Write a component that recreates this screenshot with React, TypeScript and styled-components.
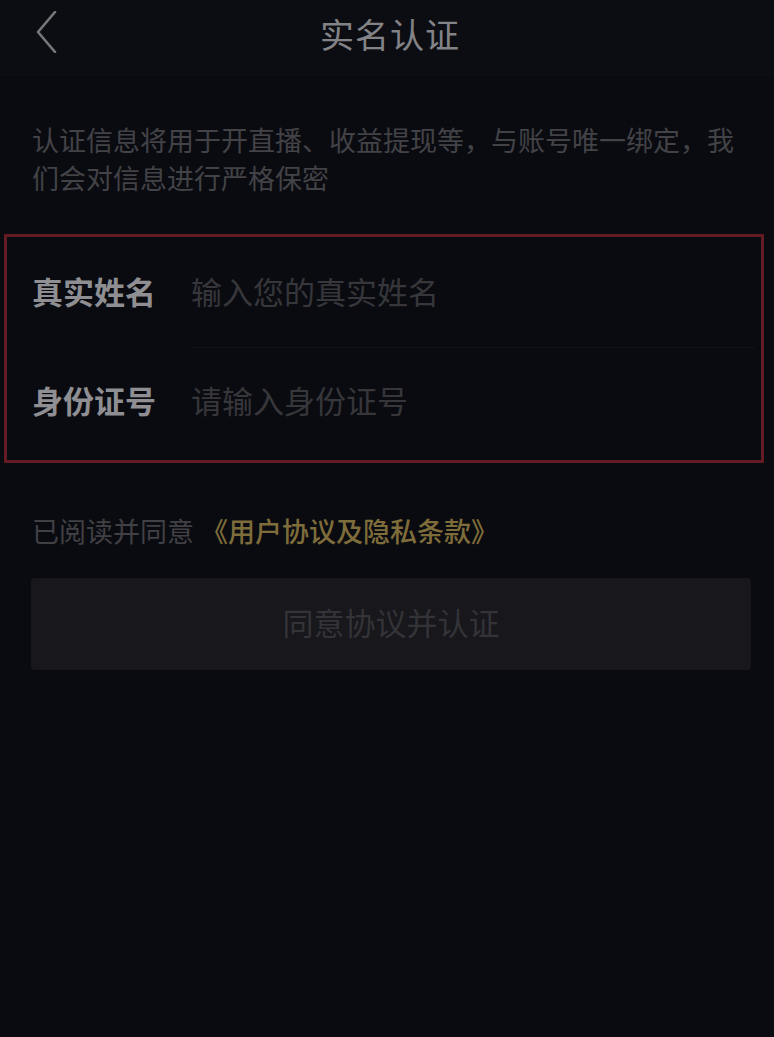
import React from 'react';
import styled, { createGlobalStyle } from 'styled-components';

const GlobalStyle = createGlobalStyle`
  html, body {
    margin: 0;
    padding: 0;
    background: #0a0b10;
  }
  body {
    font-family: "Noto Sans CJK SC", "Noto Sans", sans-serif;
  }
  * {
    box-sizing: border-box;
  }
`;

const Page = styled.div`
  min-height: 1037px;
  width: 774px;
  background: #0a0b10;
  display: flex;
  flex-direction: column;
`;

const Header = styled.header`
  height: 76px;
  display: flex;
  align-items: center;
  justify-content: center;
  position: relative;
  background: #0c0d12;
  border-bottom: 1px solid #0f1015;
`;

const BackButton = styled.button`
  position: absolute;
  left: 25px;
  top: 6px;
  width: 44px;
  height: 52px;
  padding: 0;
  border: none;
  background: transparent;
  display: flex;
  align-items: center;
  justify-content: center;
`;

const Title = styled.h1`
  margin: 0 0 8px 6px;
  font-size: 34px;
  font-weight: 400;
  color: #838387;
  letter-spacing: 1px;
`;

const Notice = styled.p`
  margin: 45px 30px 0 32px;
  font-size: 27px;
  line-height: 38px;
  color: #424247;
`;

const FormBox = styled.section`
  margin: 37px 10px 0 4px;
  border: 3px solid #641b23;
  display: flex;
  flex-direction: column;
`;

const Row = styled.label<{ $last?: boolean }>`
  height: ${(p) => (p.$last ? 112 : 110)}px;
  display: flex;
  align-items: center;
  padding-left: 25px;
  padding-bottom: ${(p) => (p.$last ? 10 : 4)}px;
`;

const Label = styled.span`
  width: 159px;
  flex-shrink: 0;
  font-size: 31px;
  font-weight: 700;
  color: #8f8f93;
`;

const Input = styled.input`
  flex: 1;
  height: 100%;
  border: none;
  outline: none;
  background: transparent;
  font-family: inherit;
  font-size: 31px;
  color: #8f8f93;
  padding: 0;
  &::placeholder {
    color: #36363b;
  }
`;

const Divider = styled.div`
  height: 1px;
  margin-left: 184px;
  margin-right: 6px;
  background: #121318;
`;

const Agreement = styled.p`
  margin: 49px 0 0 32px;
  font-size: 27px;
  line-height: 38px;
  color: #404045;
`;

const Link = styled.span`
  margin-left: 7px;
  color: #7e6d3a;
  font-weight: 500;
`;

const SubmitButton = styled.button`
  margin: 28px 0 0 31px;
  width: 720px;
  height: 92px;
  border: none;
  border-radius: 4px;
  background: #17171c;
  font-family: inherit;
  font-size: 31px;
  color: #333338;
  padding: 0 0 6px;
`;

export default function App() {
  return (
    <Page>
      <GlobalStyle />
      <Header>
        <BackButton aria-label="返回">
          <svg width="24" height="42" viewBox="0 0 24 42" fill="none">
            <path
              d="M20 1 L3 21 L20 41"
              stroke="#77777b"
              strokeWidth="2.6"
              strokeLinecap="round"
              strokeLinejoin="round"
            />
          </svg>
        </BackButton>
        <Title>实名认证</Title>
      </Header>
      <Notice>认证信息将用于开直播、收益提现等，与账号唯一绑定，我们会对信息进行严格保密</Notice>
      <FormBox>
        <Row>
          <Label>真实姓名</Label>
          <Input placeholder="输入您的真实姓名" />
        </Row>
        <Divider />
        <Row $last>
          <Label>身份证号</Label>
          <Input placeholder="请输入身份证号" />
        </Row>
      </FormBox>
      <Agreement>
        已阅读并同意<Link>《用户协议及隐私条款》</Link>
      </Agreement>
      <SubmitButton>同意协议并认证</SubmitButton>
    </Page>
  );
}
